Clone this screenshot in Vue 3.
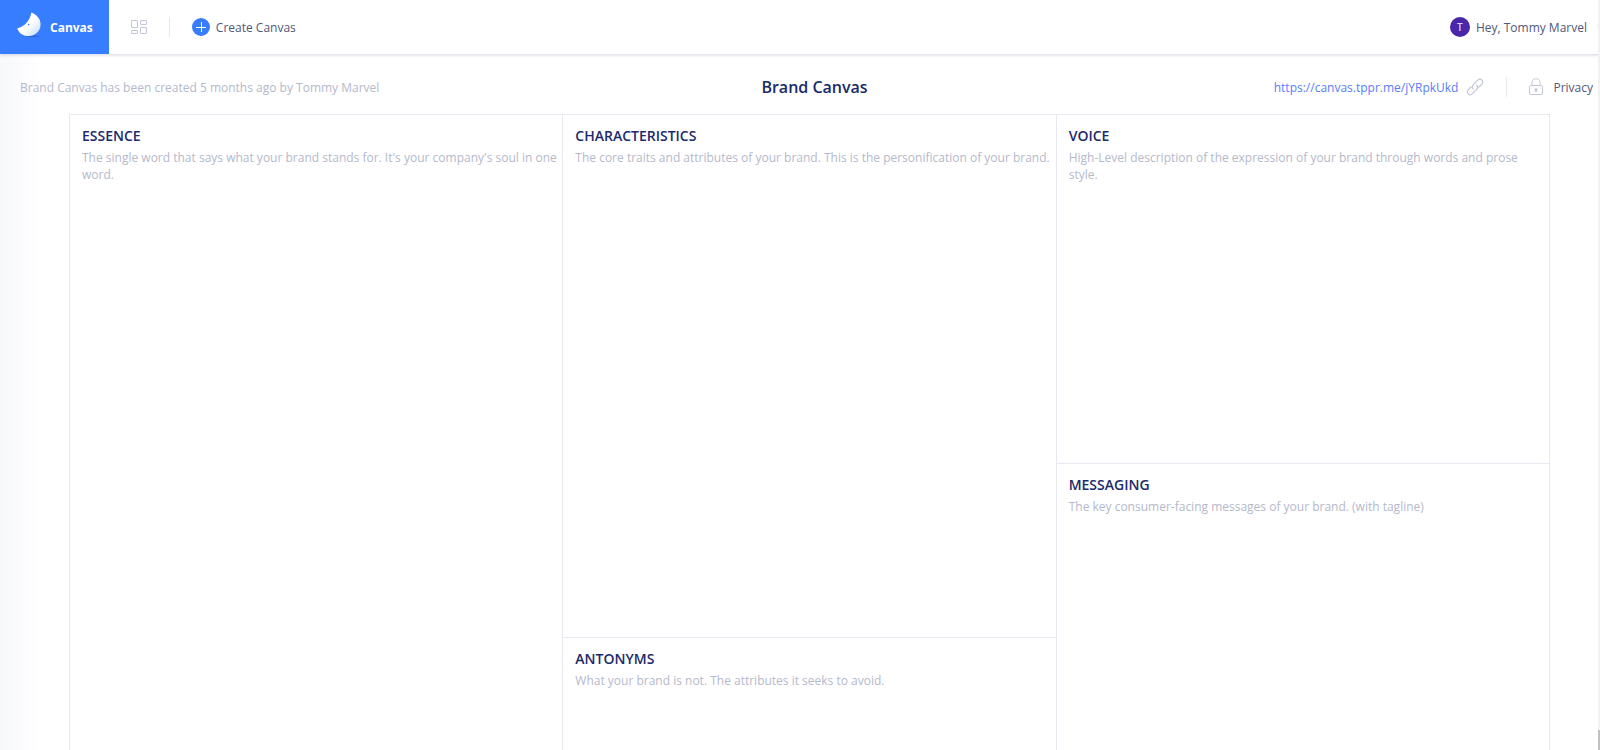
<template>
  <div class="page">
    <header class="header">
      <a href="#" class="brand">
        <svg class="brand-logo" width="26" height="26" viewBox="0 0 26 26">
          <defs>
            <linearGradient id="moon" x1="0.3" y1="0.3" x2="0.9" y2="0.9">
              <stop offset="0.4" stop-color="#ffffff" />
              <stop offset="1" stop-color="#c9e0fb" />
            </linearGradient>
          </defs>
          <ellipse cx="17" cy="24.2" rx="7" ry="0.7" fill="#2c63dd" />
          <path d="M15.3 0.4C20.8 2.4 24.6 6.8 24.6 12.3C24.6 19 19.5 24 13 24C7.5 24 3 21.5 1.2 16.4C8.5 14.4 14.2 8.4 15.3 0.4Z" fill="url(#moon)" />
          <circle cx="12.6" cy="12.6" r="0.8" fill="#377dff" />
        </svg>
        <span>Canvas</span>
      </a>
      <nav class="nav">
        <button class="icon-btn" aria-label="All canvases">
          <svg width="16" height="14" viewBox="0 0 16 14" fill="none" stroke="#c3c6d8">
            <rect x="0.5" y="0.5" width="6" height="7" rx="0.5" />
            <rect x="9.5" y="0.5" width="6" height="4" rx="0.5" />
            <rect x="0.5" y="10.5" width="6" height="3" rx="0.5" />
            <rect x="9.5" y="7.5" width="6" height="6" rx="0.5" />
          </svg>
        </button>
        <span class="divider"></span>
        <button class="create-btn">
          <svg width="18" height="18" viewBox="0 0 18 18">
            <circle cx="9" cy="9" r="9" fill="#377dff" />
            <path d="M4 9.5H14M9.5 4V14" stroke="#fff" />
          </svg>
          Create Canvas
        </button>
      </nav>
      <button class="user-btn">
        <span class="avatar">T</span>
        Hey, Tommy Marvel
        <svg class="caret" width="8" height="6" viewBox="0 0 8 6" fill="none" stroke="#b5b9cc">
          <path d="M0.5 1L4 4.5L7.5 1" />
        </svg>
      </button>
    </header>

    <main class="content">
      <div class="toolbar">
        <p class="created">Brand Canvas has been created 5 months ago by Tommy Marvel</p>
        <h1 class="title">Brand Canvas</h1>
        <div class="tools">
          <a href="#" class="share">
            https://canvas.tppr.me/jYRpkUkd
            <svg width="18" height="18" viewBox="0 0 18 18" fill="none" stroke="#c3c6d8" stroke-width="1.2" stroke-linecap="round">
              <path d="M7.2 10.8C6 9.6 6 8 7.2 6.8L11.7 2.2C13 0.9 14.6 0.9 15.8 2.1C17 3.3 17 5 15.8 6.2L13 9" />
              <path d="M10.8 7.2C12 8.4 12 10 10.8 11.2L6.3 15.8C5 17.1 3.4 17.1 2.2 15.9C1 14.7 1 13 2.2 11.8L5 9" />
            </svg>
          </a>
          <span class="divider"></span>
          <button class="privacy-btn">
            <svg width="14" height="18" viewBox="0 0 14 18" fill="none" stroke="#c3c6d8">
              <rect x="0.5" y="7.5" width="13" height="9" rx="1.5" />
              <path d="M3 7.5V4.5C3 2.2 4.7 0.7 7 0.7C9.3 0.7 11 2.2 11 4.5V7.5" />
              <ellipse cx="7" cy="12" rx="1.4" ry="2" fill="#c3c6d8" stroke="none" />
            </svg>
            Privacy
          </button>
        </div>
      </div>

      <div class="board">
        <section v-for="block in blocks" :key="block.id" class="block" :class="block.id">
          <h2 class="block-title">{{ block.title }}</h2>
          <p class="block-text">{{ block.text }}</p>
        </section>
      </div>
    </main>

    <div class="scrollbar"><span class="thumb"></span></div>
  </div>
</template>

<script setup>
const blocks = [
  { id: 'essence', title: 'ESSENCE', text: "The single word that says what your brand stands for. It's your company's soul in one word." },
  { id: 'characteristics', title: 'CHARACTERISTICS', text: 'The core traits and attributes of your brand. This is the personification of your brand.' },
  { id: 'voice', title: 'VOICE', text: 'High-Level description of the expression of your brand through words and prose style.' },
  { id: 'messaging', title: 'MESSAGING', text: 'The key consumer-facing messages of your brand. (with tagline)' },
  { id: 'antonyms', title: 'ANTONYMS', text: 'What your brand is not. The attributes it seeks to avoid.' },
]
</script>

<style>
body { margin: 0; }
</style>

<style scoped>
.page {
  position: relative;
  height: 100vh;
  overflow: hidden;
  background: #fff;
  font-family: 'Open Sans', 'Noto Sans', sans-serif;
  font-size: 12px;
  color: #51577a;
}

button {
  display: flex; align-items: center;
  padding: 0;
  border: none;
  background: none;
  font: inherit;
  color: inherit;
  white-space: nowrap;
  cursor: pointer;
}
a { text-decoration: none; }
svg { flex: none; }

.header {
  position: relative;
  display: flex; align-items: stretch;
  height: 54px;
  background: #fff;
  box-shadow: 0 1px 3px rgba(70,85,130,0.25);
}

.brand {
  display: flex; align-items: center;
  gap: 8px;
  padding: 0 16px;
  background: #377dff;
  color: #fff;
  font-weight: 700;
}
.brand-logo { margin-bottom: 4px; }

.nav {
  display: flex; align-items: center;
  gap: 22px;
  flex: 1;
  padding-left: 22px;
}

.divider {
  width: 1px; height: 20px;
  background: #e7e9f1;
}

.create-btn { gap: 6px; }

.user-btn { gap: 6px; margin-right: -5px; }
.avatar {
  width: 20px; height: 20px;
  border-radius: 50%;
  background: #4a27a8;
  color: #d9d2f0;
  font-size: 10px;
  font-weight: 600;
  line-height: 20px;
  text-align: center;
}
.caret { margin-left: 4px; }

.content {
  background: linear-gradient(90deg, #f7f8fb, #fff 42px);
}

.toolbar {
  display: grid; align-items: center;
  grid-template-columns: 1fr auto 1fr;
  height: 60px;
  padding: 6px 7px 0 20px;
  box-sizing: border-box;
}

.created { margin: 0; color: #b4b9cb; }

.title {
  margin: 0;
  padding-left: 16px;
  font-size: 16px;
  font-weight: 600;
  color: #1b2a6b;
}

.tools {
  display: flex; align-items: center; justify-content: flex-end;
  gap: 22px;
}
.share {
  display: flex; align-items: center;
  gap: 8px;
  color: #5a7dfa;
}
.privacy-btn { gap: 10px; }

.board {
  display: grid;
  grid-template-columns: repeat(3, 1fr);
  grid-template-rows: 2fr 1fr 1fr;
  grid-template-areas:
    'essence characteristics voice'
    'essence characteristics messaging'
    'essence antonyms messaging';
  height: 93vh;
  margin: 0 50px 0 69px;
  border-top: 1px solid #e7e9f1;
  border-left: 1px solid #e7e9f1;
}

.block {
  padding: 12px 4px 12px 12px;
  border-right: 1px solid #e7e9f1;
  border-bottom: 1px solid #e7e9f1;
}
.essence { grid-area: essence; }
.characteristics { grid-area: characteristics; }
.voice { grid-area: voice; }
.messaging { grid-area: messaging; }
.antonyms { grid-area: antonyms; }

.block-title {
  margin: 0 0 4px;
  font-size: 14px;
  font-weight: 600;
  line-height: 18px;
  color: #1b2a6b;
}
.block-text {
  margin: 0;
  line-height: 17px;
  color: #b4b9cb;
}

.scrollbar {
  position: absolute; top: 0; right: 0; bottom: 0;
  width: 2px;
  background: #f1f1f1;
}
.thumb {
  position: absolute; right: 0; bottom: 0;
  width: 2px; height: 20px;
  background: #c1c1c1;
}
</style>
